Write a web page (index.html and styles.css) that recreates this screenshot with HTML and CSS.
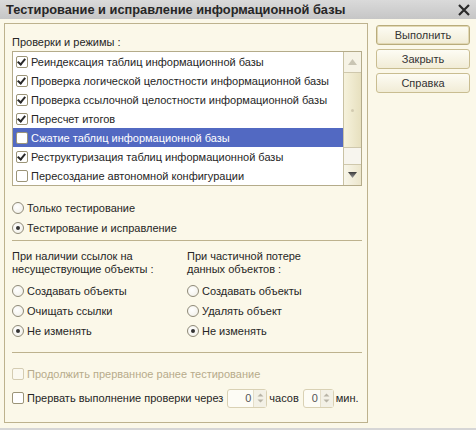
FILE: index.html
```html
<!DOCTYPE html>
<html lang="ru">
<head>
<meta charset="utf-8">
<link rel="stylesheet" href="styles.css">
</head>
<body>
<div class="window">
  <div class="titlebar">
    <span class="title">Тестирование и исправление информационной базы</span>
    <svg class="close" width="12" height="12" viewBox="0 0 12 12"><path d="M1 1 L11 11 M11 1 L1 11" stroke="#2a2a2a" stroke-width="2.2" fill="none"/></svg>
  </div>
  <div class="main">
    <div class="panel">
      <div class="label">Проверки и режимы :</div>
      <div class="listbox">
        <div class="rows">
          <div class="row"><span class="cb checked"></span>Реиндексация таблиц информационной базы</div>
          <div class="row"><span class="cb checked"></span>Проверка логической целостности информационной базы</div>
          <div class="row"><span class="cb checked"></span>Проверка ссылочной целостности информационной базы</div>
          <div class="row"><span class="cb checked"></span>Пересчет итогов</div>
          <div class="row selected"><span class="cb"></span>Сжатие таблиц информационной базы</div>
          <div class="row"><span class="cb checked"></span>Реструктуризация таблиц информационной базы</div>
          <div class="row"><span class="cb"></span>Пересоздание автономной конфигурации</div>
        </div>
        <div class="scrollbar">
          <div class="sb-btn up"><svg width="9" height="6" viewBox="0 0 9 6"><path d="M0 6 L4.5 0 L9 6 Z" fill="#c9c5b4"/></svg></div>
          <div class="sb-thumb"><span class="grip"></span></div>
          <div class="sb-track"></div>
          <div class="sb-btn down"><svg width="9" height="6" viewBox="0 0 9 6"><defs><linearGradient id="dg" x1="0" y1="0" x2="0" y2="1"><stop offset="0" stop-color="#3a3a3a"/><stop offset="1" stop-color="#9a9a9a"/></linearGradient></defs><path d="M0 0 L9 0 L4.5 6 Z" fill="url(#dg)"/></svg></div>
        </div>
      </div>
      <div class="mode">
        <div class="opt"><span class="rb"></span>Только тестирование</div>
        <div class="opt"><span class="rb on"></span>Тестирование и исправление</div>
      </div>
      <div class="sep"></div>
      <div class="cols">
        <div class="col">
          <div class="head">При наличии ссылок на<br>несуществующие объекты :</div>
          <div class="opt"><span class="rb"></span>Создавать объекты</div>
          <div class="opt"><span class="rb"></span>Очищать ссылки</div>
          <div class="opt"><span class="rb on"></span>Не изменять</div>
        </div>
        <div class="col">
          <div class="head">При частичной потере<br>данных объектов :</div>
          <div class="opt"><span class="rb"></span>Создавать объекты</div>
          <div class="opt"><span class="rb"></span>Удалять объект</div>
          <div class="opt"><span class="rb on"></span>Не изменять</div>
        </div>
      </div>
      <div class="sep sep2"></div>
      <div class="opt disabled"><span class="cb"></span>Продолжить прерванное ранее тестирование</div>
      <div class="opt last"><span class="cb"></span>Прервать выполнение проверки через
        <span class="spin w1"><span class="val">0</span><span class="arrows"><svg width="7" height="12" viewBox="0 0 7 12"><path d="M0.5 4.5 L3.5 1.5 L6.5 4.5 Z M0.5 7.5 L3.5 10.5 L6.5 7.5 Z" fill="#b8b4a6"/></svg></span></span>
        <span class="unit">часов</span>
        <span class="spin w2"><span class="val">0</span><span class="arrows"><svg width="7" height="12" viewBox="0 0 7 12"><path d="M0.5 4.5 L3.5 1.5 L6.5 4.5 Z M0.5 7.5 L3.5 10.5 L6.5 7.5 Z" fill="#b8b4a6"/></svg></span></span>
        <span class="unit">мин.</span>
      </div>
    </div>
    <div class="buttons">
      <div class="btn default">Выполнить</div>
      <div class="btn">Закрыть</div>
      <div class="btn">Справка</div>
    </div>
  </div>
</div>
</body>
</html>
```
FILE: styles.css
```css
html, body {
  margin: 0;
  padding: 0;
}
body {
  width: 476px;
  height: 430px;
  overflow: hidden;
  background: #d6d6d6;
  font-family: "Liberation Sans", Arial, sans-serif;
  font-size: 11px;
  color: #262626;
}
.window {
  width: 476px;
  height: 428px;
  background: #fbf8e9;
  display: flex;
  flex-direction: column;
}
.titlebar {
  height: 19px;
  background: linear-gradient(#dadada, #c6c6c6);
  display: flex;
  align-items: center;
  justify-content: space-between;
  padding: 0 5px 0 6px;
  box-sizing: border-box;
}
.title {
  font-weight: bold;
  font-size: 12.8px;
  color: #262626;
}
.close {
  margin-right: 1px;
}
.main {
  display: flex;
  gap: 8px;
  padding: 4px 0 0 4px;
}
.panel {
  width: 364px;
  height: 400px;
  box-sizing: border-box;
  border: 1px solid #bdb28e;
  padding: 10px 5px 0 7px;
  display: flex;
  flex-direction: column;
}
.label {
  line-height: 16px;
  height: 16px;
  margin-bottom: 1px;
}
.listbox {
  display: flex;
  border: 1px solid #b4ab8a;
  background: #fff;
  height: 135px;
  box-sizing: border-box;
}
.rows {
  flex: 1;
}
.row {
  height: 19px;
  display: flex;
  align-items: center;
  padding-left: 3px;
  white-space: nowrap;
}
.row.selected {
  background: #5269c2;
  color: #fff;
}
.cb {
  width: 10px;
  height: 10px;
  border: 1px solid #9b9478;
  border-radius: 2px;
  background: #fff;
  margin-right: 3px;
  flex: none;
  position: relative;
}
.cb.checked::after {
  content: "";
  position: absolute;
  left: 2px;
  top: 0px;
  width: 3px;
  height: 6px;
  border: solid #2a2a2a;
  border-width: 0 2px 2px 0;
  transform: rotate(40deg);
}
.scrollbar {
  width: 17px;
  border-left: 1px solid #c9c2a4;
  display: flex;
  flex-direction: column;
}
.sb-btn {
  height: 20px;
  display: flex;
  align-items: center;
  justify-content: center;
  background: #f6f3e6;
}
.sb-btn.up {
  border-bottom: 1px solid #cfc8ad;
}
.sb-btn.down {
  border-top: 1px solid #cfc8ad;
  background: linear-gradient(90deg, #f8f6ea, #ece6cc);
}
.sb-thumb {
  height: 74px;
  background: linear-gradient(90deg, #f6f2dc, #e7e0bf);
  border-bottom: 1px solid #cfc8ad;
  display: flex;
  align-items: center;
  justify-content: center;
}
.grip {
  width: 3px;
  height: 3px;
  border-radius: 50%;
  background: #d2cbb0;
}
.sb-track {
  flex: 1;
  background: #f7f5ee;
}
.mode {
  margin-top: 12px;
}
.opt {
  height: 20px;
  display: flex;
  align-items: center;
  white-space: nowrap;
}
.rb {
  width: 10px;
  height: 10px;
  border: 1px solid #8f8a78;
  border-radius: 50%;
  background: radial-gradient(circle at 40% 40%, #ffffff, #efede4);
  margin-right: 3px;
  flex: none;
  position: relative;
}
.rb.on::after {
  content: "";
  position: absolute;
  left: 3px;
  top: 3px;
  width: 4px;
  height: 4px;
  border-radius: 50%;
  background: #333;
}
.sep {
  height: 1px;
  background: #bdb28e;
  margin: 2px 0 0 0;
}
.cols {
  display: flex;
  margin-top: 9px;
}
.col {
  width: 176px;
}
.head {
  line-height: 13px;
  margin-bottom: 5px;
}
.sep2 {
  margin-top: 11px;
  margin-bottom: 11px;
}
.opt.disabled {
  color: #b7ab8b;
}
.opt.disabled .cb {
  border-color: #d4ccb2;
  background: #fbf9f0;
}
.opt.last {
  margin-top: 4px;
}
.spin {
  display: inline-flex;
  align-items: stretch;
  height: 19px;
  box-sizing: border-box;
  border: 1px solid #d9d1b4;
  border-radius: 3px;
  background: #fdfcf5;
  margin-left: 4px;
}
.spin.w1 { width: 40px; }
.spin.w2 { width: 31px; margin-left: 4px; }
.val {
  flex: 1;
  text-align: right;
  line-height: 17px;
  padding-right: 2px;
  color: #555;
}
.arrows {
  width: 12px;
  display: flex;
  align-items: center;
  justify-content: center;
  background: #f3f1e6;
  border-left: 1px solid #e4dec8;
}
.unit {
  margin-left: 2px;
}
.buttons {
  display: flex;
  flex-direction: column;
  gap: 4px;
  padding-top: 2px;
}
.btn {
  width: 94px;
  height: 20px;
  box-sizing: border-box;
  border: 1px solid #c9bd91;
  border-radius: 3px;
  background: linear-gradient(#fdfcf4, #f1ecd6);
  display: flex;
  align-items: center;
  justify-content: center;
  color: #333;
  font-size: 11px;
}
.btn.default {
  border: 1px solid #b9ac7c;
  box-shadow: inset 0 0 0 1px #e2d8b4;
}
```
